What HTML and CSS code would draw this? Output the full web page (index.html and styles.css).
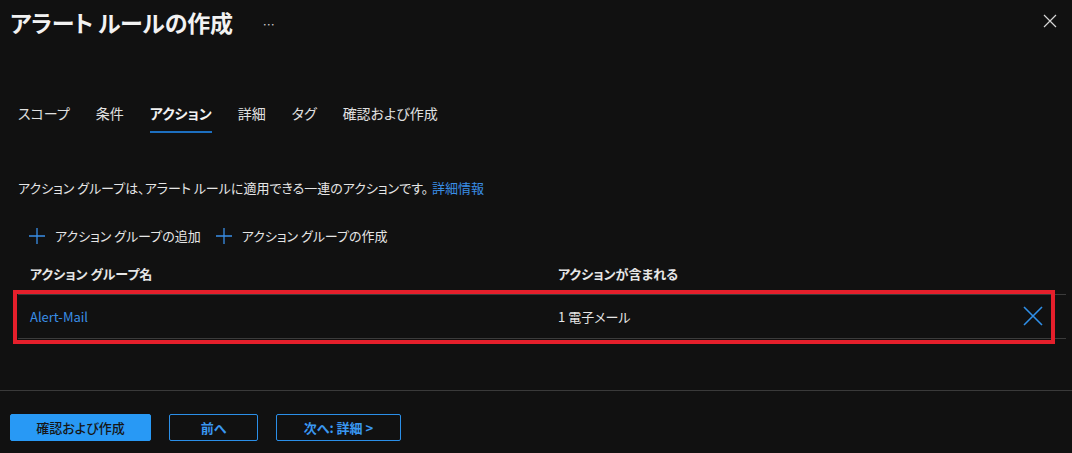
FILE: index.html
```html
<!DOCTYPE html>
<html lang="ja">
<head>
  <meta charset="UTF-8">
  <title>アラート ルールの作成</title>
  <link rel="stylesheet" href="styles.css">
</head>
<body>

  <div class="header">
    <h1>アラート ルールの作成</h1>
    <span class="more">…</span>
    <svg class="close" width="14" height="14" viewBox="0 0 14 14">
      <path d="M1 1 L13 13 M13 1 L1 13" stroke="#d6d6d6" stroke-width="1.2" fill="none"/>
    </svg>
  </div>

  <div class="tabs">
    <span class="tab">スコープ</span>
    <span class="tab">条件</span>
    <span class="tab active">アクション</span>
    <span class="tab">詳細</span>
    <span class="tab">タグ</span>
    <span class="tab">確認および作成</span>
  </div>

  <p class="desc">アクション グループは、アラート ルールに適用できる一連のアクションです。<a href="#">詳細情報</a></p>

  <div class="toolbar">
    <span class="cmd">
      <svg width="18" height="18" viewBox="0 0 18 18"><path d="M9 1 V17 M1 9 H17" stroke="#3a8ee6" stroke-width="1.3" fill="none"/></svg>
      アクション グループの追加
    </span>
    <span class="cmd">
      <svg width="18" height="18" viewBox="0 0 18 18"><path d="M9 1 V17 M1 9 H17" stroke="#3a8ee6" stroke-width="1.3" fill="none"/></svg>
      アクション グループの作成
    </span>
  </div>

  <div class="grid">
    <div class="grid-head">
      <span class="col-name">アクション グループ名</span>
      <span class="col-actions">アクションが含まれる</span>
    </div>
    <div class="grid-row">
      <a href="#" class="col-name">Alert-Mail</a>
      <span class="col-actions">1 電子メール</span>
      <svg class="remove" width="20" height="20" viewBox="0 0 20 20">
        <path d="M1 1 L19 19 M19 1 L1 19" stroke="#2f8fe8" stroke-width="1.6" fill="none"/>
      </svg>
      <div class="highlight"></div>
    </div>
  </div>

  <div class="footer">
    <button class="btn primary">確認および作成</button>
    <button class="btn">前へ</button>
    <button class="btn">次へ: 詳細 &gt;</button>
  </div>

</body>
</html>
```

FILE: styles.css
```css
body {
  margin: 0;
  background-color: #111111;
  color: #e6e6e6;
  font-family: "Noto Sans CJK JP", "Noto Sans", sans-serif;
  font-feature-settings: "palt";
  font-size: 13px;
  height: 453px;
  overflow: hidden;
}

a {
  color: #3a8ee6;
  text-decoration: none;
}

.header {
  display: flex;
  align-items: center;
  height: 44px;
  padding: 0 15px 0 10px;
}

h1 {
  margin: 0;
  font-size: 23px;
  font-weight: 600;
  color: #f2f2f2;
  letter-spacing: -0.2px;
}

.more {
  margin-left: 30px;
  margin-top: 4px;
  font-size: 12px;
  color: #cfcfcf;
}

.close {
  margin-left: auto;
  margin-top: -2px;
}

.tabs {
  display: flex;
  gap: 26px;
  margin-top: 59px;
  padding-left: 18px;
}

.tab {
  font-size: 14px;
  line-height: 20px;
  padding-bottom: 8px;
  border-bottom: 2px solid transparent;
  color: #e0e0e0;
}

.tab.active {
  font-weight: 600;
  border-bottom-color: #1d6fc0;
  color: #f2f2f2;
}

.desc {
  margin: 46px 0 0 18px;
  line-height: 18px;
}

.desc a {
  margin-left: 4px;
}

.toolbar {
  display: flex;
  gap: 14px;
  margin-top: 30px;
  padding-left: 28px;
}

.cmd {
  display: flex;
  align-items: center;
  gap: 9px;
  line-height: 18px;
}

.grid {
  margin: 16px 6px 0 18px;
}

.grid-head {
  display: flex;
  height: 24px;
  align-items: center;
  font-weight: 700;
  padding-left: 12px;
}

.col-name {
  width: 528px;
}

.grid-row {
  position: relative;
  display: flex;
  align-items: center;
  height: 43px;
  margin-top: 9px;
  padding-left: 12px;
  border-top: 1px solid #3b3b3b;
  border-bottom: 1px solid #3b3b3b;
}

.remove {
  margin-left: auto;
  margin-right: 23px;
  margin-top: -2px;
}

.highlight {
  position: absolute;
  top: -5px;
  left: -5px;
  right: 11px;
  bottom: -6px;
  border: 4px solid #e51f2b;
}

.footer {
  display: flex;
  gap: 18px;
  margin-top: 51px;
  padding: 23px 10px 0 10px;
  border-top: 1px solid #3a3a3a;
}

.btn {
  height: 27px;
  padding: 0 20px;
  font-family: inherit;
  font-feature-settings: "palt";
  font-size: 13px;
  font-weight: 600;
  color: #3a97f0;
  background-color: transparent;
  border: 1px solid #2b8fe8;
  border-radius: 2px;
}

.btn.primary {
  width: 141px;
  color: #161616;
  font-weight: 500;
  background-color: #2899f5;
  border-color: #2899f5;
}

.footer .btn:nth-child(2) {
  width: 89px;
}

.footer .btn:nth-child(3) {
  width: 125px;
}
```
